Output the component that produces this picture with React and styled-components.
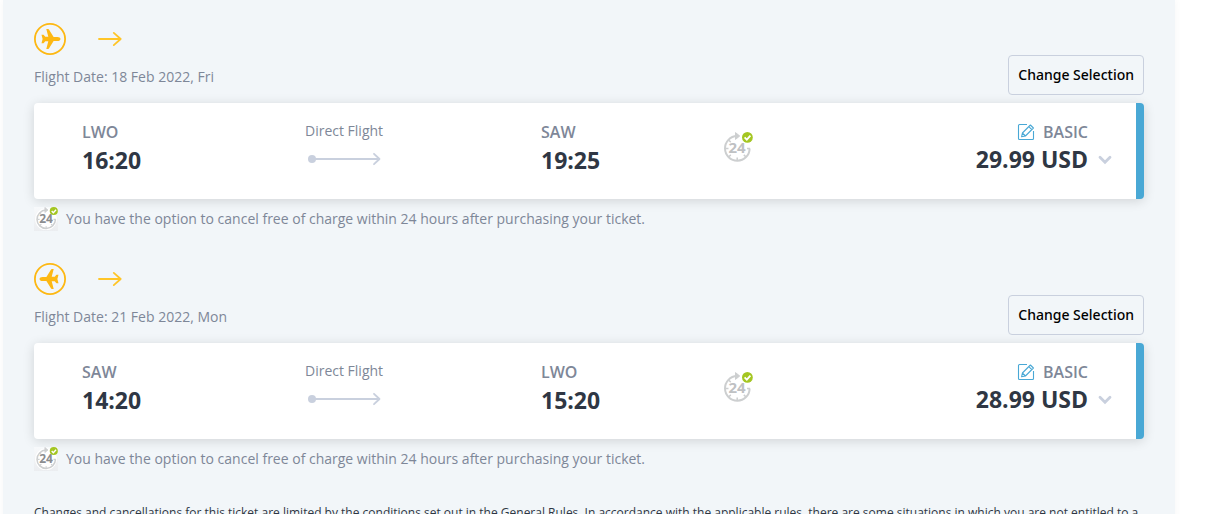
import React from "react";
import styled, { createGlobalStyle } from "styled-components";

const GlobalStyle = createGlobalStyle`
  * { box-sizing: border-box; }
  body {
    margin: 0;
    background: #fff;
    color: #2f3744;
    font-family: "Open Sans", "Noto Sans", sans-serif;
    font-size: 14px;
    line-height: 20px;
    overflow-x: hidden;
  }
`;

const Page = styled.main`
  margin: 0 34px 0 3px;
  padding: 23px 31px 32px;
  background: #f2f6f9;
  box-shadow: 0 0 8px rgba(0, 0, 0, 0.04);
`;

const Segment = styled.section`
  margin-bottom: 32px;
`;

const SegmentHeader = styled.header`
  display: flex;
  justify-content: space-between;
  align-items: flex-end;
  margin-bottom: 8px;
`;

const Route = styled.div`
  display: flex;
  align-items: center;
  gap: 32px;
  margin-bottom: 12px;
`;

const FlightDate = styled.p`
  margin: 0 0 8px;
  color: #7e8798;
`;

const ChangeButton = styled.button`
  height: 40px;
  padding: 0 9px;
  border: 1px solid #c9d0de;
  border-radius: 4px;
  background: transparent;
  color: #000;
  font: 500 14px/20px "Noto Sans", "Open Sans", sans-serif;
  white-space: nowrap;
  cursor: pointer;
`;

const Card = styled.article`
  display: grid;
  grid-template-columns: 223fr 236fr 182fr 365fr;
  align-items: start;
  height: 96px;
  padding: 18px 48px;
  border-right: 8px solid #49a8d5;
  border-radius: 4px;
  background: #fff;
  box-shadow: 0 2px 12px rgba(0, 0, 0, 0.14);
`;

const Airport = styled.div`
  color: #7e8798;
  font-size: 16px;
  font-weight: 600;
  line-height: 22px;
`;

const Time = styled.div`
  color: #2f3744;
  font-size: 23px;
  font-weight: 700;
  line-height: 34px;
`;

const Connection = styled.div`
  color: #7e8798;

  svg {
    display: block;
    margin: 10px 0 0 3px;
  }
`;

const FareSummary = styled.div`
  display: flex;
  justify-content: space-between;
  align-items: flex-start;
`;

const PerkIcon = styled.div`
  padding-top: 10px;

  svg { display: block; }
`;

const Fare = styled.div`
  position: relative;
  text-align: right;
`;

const FareClass = styled.div`
  display: flex;
  justify-content: flex-end;
  align-items: center;
  gap: 8px;
  color: #7e8798;
  font-size: 16px;
  font-weight: 600;
  line-height: 22px;
`;

const Price = styled.div`
  color: #2f3744;
  font-size: 23px;
  font-weight: 700;
  line-height: 32px;
`;

const ExpandButton = styled.button`
  position: absolute;
  right: -24px;
  bottom: 10px;
  padding: 0;
  border: 0;
  background: none;
  cursor: pointer;

  svg { display: block; }
`;

const Note = styled.p`
  display: flex;
  align-items: center;
  gap: 8px;
  margin: 8px 0 0;
  color: #7e8798;
`;

const NoteIcon = styled.span`
  display: flex;
  background: linear-gradient(#f7f9fb, #ebedf0);
`;

const Rules = styled.p`
  margin: 0;
  font-size: 12px;
`;

const PlaneIcon = ({ inbound }) => (
  <svg width="32" height="32" viewBox="0 0 32 32" aria-hidden="true">
    <circle cx="16" cy="16" r="15.1" fill="none" stroke="#fdb813" strokeWidth="1.8" />
    <path
      transform={inbound ? "translate(32 0) scale(-1 1)" : undefined}
      fill="#fdb813"
      d="M26.5 16c0 1.3-1.4 2.1-3 2.1h-3.9l-4.5 7.2c-.2.4-.6.6-1 .6h-1.8l2-7.7h-3l-1.5 1.8c-.2.2-.4.3-.7.3H7.5L8.6 16l-1.1-4.3h1.6c.3 0 .5.1.7.3l1.5 1.8h3l-2-7.7h1.8c.4 0 .8.2 1 .6l4.5 7.2h3.9c1.6 0 3 .8 3 2.1z"
    />
  </svg>
);

const RouteArrow = () => (
  <svg width="24" height="16" viewBox="0 0 24 16" fill="none" stroke="#ffc528" strokeWidth="1.8" strokeLinecap="round" strokeLinejoin="round" aria-hidden="true">
    <path d="M1 8h21.5M15.8 1.9 22.7 8l-6.9 6.1" />
  </svg>
);

const ConnectionArrow = () => (
  <svg width="74" height="16" viewBox="0 0 74 16" fill="none" stroke="#c9d0de" strokeWidth="1.8" strokeLinecap="round" strokeLinejoin="round" aria-hidden="true">
    <circle cx="4" cy="8" r="4" fill="#c9d0de" stroke="none" />
    <path d="M6 8h65M66 2.8 71.5 8 66 13.2" />
  </svg>
);

const Cancel24Icon = ({ size, dark }) => (
  <svg width={size} height={size} viewBox={dark ? "-2 1 32 32" : "0 0 32 32"} fill="none" role="img" aria-label="24 hour free cancellation">
    {dark && <circle cx="14" cy="17.3" r="14.5" fill="#fff" />}
    <path d="M14 5.1a12.3 12.3 0 1 0 12.6 12.3" stroke="#cdcfd0" strokeWidth="2" />
    <path d="M12.5 1.6 16.7 5l-4.2 3.4z" fill="#cdcfd0" stroke="#cdcfd0" />
    <path d="M2.5 17.5h3M14.2 26.5v3M5.8 9.3l2 1.8M5.8 25.7l2-1.8M22.8 25.7l-2-1.8M24 17.5h3" stroke="#cdcfd0" strokeWidth="1.5" />
    <text x="14" y="22" textAnchor="middle" fontFamily="Open Sans, sans-serif" fontSize={dark ? 16 : 15} fontWeight="700" fill={dark ? "#8b8d90" : "#bfc1c3"}>24</text>
    <circle cx="24.4" cy="6.4" r="5.4" fill="#a4c622" />
    <path d="m21.6 6.4 2.2 2.2 3.6-4" stroke="#fff" strokeWidth="1.8" />
  </svg>
);

const EditIcon = () => (
  <svg width="18" height="18" viewBox="0 0 18 18" fill="none" stroke="#49a8d5" strokeWidth="1.1" strokeLinejoin="round" aria-hidden="true">
    <path d="M10 1.5H2.5a1 1 0 0 0-1 1v13a1 1 0 0 0 1 1h13a1 1 0 0 0 1-1V8" />
    <path d="m4.6 13.8.8-3.8 8-8 3 3-8 8zM11.8 3.6l3 3M5.4 10l3 3" />
  </svg>
);

const ChevronIcon = () => (
  <svg width="14" height="10" viewBox="0 0 14 10" fill="none" stroke="#c9d0de" strokeWidth="2.8" strokeLinecap="round" aria-hidden="true">
    <path d="M2 2.2 7 7.2l5-5" />
  </svg>
);

const flights = [
  { date: "18 Feb 2022, Fri", from: "LWO", departs: "16:20", to: "SAW", arrives: "19:25", price: "29.99 USD" },
  { date: "21 Feb 2022, Mon", from: "SAW", departs: "14:20", to: "LWO", arrives: "15:20", price: "28.99 USD", inbound: true },
];

function FlightSegment({ flight }) {
  return (
    <Segment>
      <SegmentHeader>
        <div>
          <Route>
            <PlaneIcon inbound={flight.inbound} />
            <RouteArrow />
          </Route>
          <FlightDate>Flight Date: {flight.date}</FlightDate>
        </div>
        <ChangeButton type="button">Change Selection</ChangeButton>
      </SegmentHeader>
      <Card>
        <div>
          <Airport>{flight.from}</Airport>
          <Time>{flight.departs}</Time>
        </div>
        <Connection>
          Direct Flight
          <ConnectionArrow />
        </Connection>
        <div>
          <Airport>{flight.to}</Airport>
          <Time>{flight.arrives}</Time>
        </div>
        <FareSummary>
          <PerkIcon>
            <Cancel24Icon size={32} />
          </PerkIcon>
          <Fare>
            <FareClass>
              <EditIcon />
              BASIC
            </FareClass>
            <Price>{flight.price}</Price>
            <ExpandButton type="button" aria-label="Show fare details">
              <ChevronIcon />
            </ExpandButton>
          </Fare>
        </FareSummary>
      </Card>
      <Note>
        <NoteIcon>
          <Cancel24Icon size={24} dark />
        </NoteIcon>
        You have the option to cancel free of charge within 24 hours after purchasing your ticket.
      </Note>
    </Segment>
  );
}

export default function App() {
  return (
    <>
      <GlobalStyle />
      <Page>
        {flights.map((flight) => (
          <FlightSegment key={flight.date} flight={flight} />
        ))}
        <Rules>
          Changes and cancellations for this ticket are limited by the conditions set out in the General Rules. In
          accordance with the applicable rules, there are some situations in which you are not entitled to a
        </Rules>
      </Page>
    </>
  );
}
